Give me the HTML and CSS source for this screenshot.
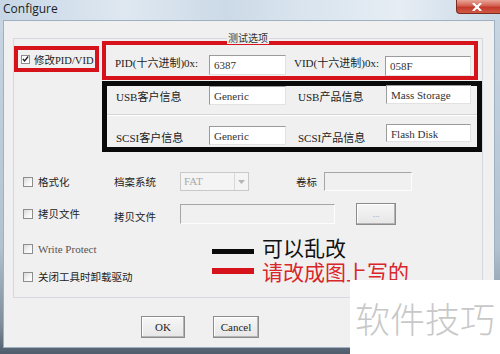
FILE: index.html
```html
<!DOCTYPE html>
<html lang="zh-CN">
<head>
  <meta charset="UTF-8" />
  <title>Configure</title>
  <link rel="stylesheet" href="styles.css">
</head>
<body>
  <div class="window">
    <div class="titlebar">
      <span class="title">Configure</span>
      <span class="close">
        <svg width="10" height="8" viewBox="0 0 10 8"><path d="M1.5 0.5 L8.5 7.5 M8.5 0.5 L1.5 7.5" stroke="#fff" stroke-width="2.2" stroke-linecap="round"/></svg>
      </span>
    </div>

    <div class="client">
      <div class="group">
        <span class="group-title">测试选项</span>

        <div class="top">
          <label class="pid-flag mark-red">
            <span class="check">
              <svg width="8" height="8" viewBox="0 0 8 8"><path d="M1 4 L3 6.3 L7 1.2" fill="none" stroke="#222" stroke-width="1.6"/></svg>
            </span>
            修改PID/VID
          </label>

          <div class="id-fields">
            <div class="id-row mark-red">
              <span class="lbl w94">PID(十六进制)0x:</span>
              <span class="input w77">6387</span>
              <span class="lbl w91 ml8">VID(十六进制)0x:</span>
              <span class="input w86 drop1">058F</span>
            </div>

            <div class="info mark-black">
              <div class="info-row">
                <span class="lbl w93 lbl-r1">USB客户信息</span>
                <span class="input w77 h19">Generic</span>
                <span class="lbl w88 ml12 lbl-r1">USB产品信息</span>
                <span class="input w85 h19 up1">Mass Storage</span>
              </div>
              <div class="sep"></div>
              <div class="info-row">
                <span class="lbl w93 lbl-r2">SCSI客户信息</span>
                <span class="input w77 h19 mt10">Generic</span>
                <span class="lbl w88 ml12 lbl-r2">SCSI产品信息</span>
                <span class="input w85 h18 mt8">Flash Disk</span>
              </div>
            </div>
          </div>
        </div>

        <div class="opt-row row-format">
          <label class="check-cell"><span class="check"></span>格式化</label>
          <span class="lbl-sans w66">档案系统</span>
          <span class="select">
            <span class="select-text">FAT</span>
            <span class="select-arrow">
              <svg width="7" height="4" viewBox="0 0 7 4"><path d="M0 0 H7 L3.5 4 Z" fill="#b5b5b5"/></svg>
            </span>
          </span>
          <span class="lbl-sans vol">卷标</span>
          <span class="input-off w88"></span>
        </div>

        <div class="opt-row row-copy">
          <label class="check-cell"><span class="check"></span>拷贝文件</label>
          <span class="lbl-sans w66 low">拷贝文件</span>
          <span class="input-off w155"></span>
          <button class="btn btn-dots">...</button>
        </div>

        <div class="opt-row row-protect">
          <label class="check-cell serif-lbl"><span class="check"></span>Write Protect</label>
        </div>

        <div class="opt-row row-unload">
          <label class="check-cell"><span class="check"></span>关闭工具时卸载驱动</label>
        </div>
      </div>

      <div class="buttons">
        <button class="btn btn-ok">OK</button>
        <button class="btn btn-cancel">Cancel</button>
      </div>
    </div>

    <!-- annotation legend -->
    <div class="legend">
      <div class="legend-item">
        <span class="bar bar-black"></span>
        <span class="legend-text">可以乱改</span>
      </div>
      <div class="legend-item red">
        <span class="bar bar-red"></span>
        <span class="legend-text">请改成图上写的</span>
      </div>
    </div>

    <div class="watermark">软件技巧</div>
  </div>
</body>
</html>
```

FILE: styles.css
```css
* { margin: 0; padding: 0; box-sizing: border-box; }
body {
  font-family: "Liberation Serif", "Noto Sans CJK SC", serif;
  background: #fff;
}
.window {
  position: relative;
  width: 500px;
  height: 354px;
  overflow: hidden;
  background: linear-gradient(#c9d7e5, #b2c1d0 70%, #7d8b9a 92%, #4f5c6b);
}
/* Title bar */
.titlebar {
  height: 20px;
  display: flex;
  justify-content: space-between;
  align-items: flex-start;
  background: linear-gradient(to right, #c7d6e6, #dfe8f1 25%, #ccdae7 45%, #d9e4ee 60%, #e6edf4 80%, #c9d8e6);
}
.title {
  font-family: "Open Sans", "Noto Sans", sans-serif;
  font-size: 12px;
  line-height: 18px;
  padding-left: 3px;
  color: #1b1f24;
}
.close {
  width: 44px;
  height: 14px;
  display: flex;
  align-items: center;
  justify-content: center;
  padding-right: 4px;
  border: 1px solid #7a2b22;
  border-top: none;
  border-right: none;
  border-radius: 0 0 0 4px;
  background: linear-gradient(#e9a597, #d3604f 45%, #c2392b 55%, #d05a45);
}
/* Client area */
.client {
  margin-left: 3px;
  width: 492px;
  height: 328px;
  border: 1px solid #9eb0c2;
  background: #f0f0f0;
}
.group {
  position: relative;
  margin: 17px 0 0 9px;
  width: 470px;
  height: 260px;
  border: 1px solid #d5d9dd;
}
.group-title {
  position: absolute;
  left: 213px;
  top: -7px;
  padding: 0 1px;
  font-family: "Noto Sans CJK SC", sans-serif;
  font-size: 10px;
  line-height: 12px;
  color: #333;
  background: #f0f0f0;
}
/* annotation boxes */
.mark-red { border: 4px solid #d6121b; }
.mark-black { border: 5px solid #0a0a0a; }

.top {
  display: flex;
  margin-top: 2px;
}
.pid-flag {
  display: flex;
  align-items: center;
  gap: 4px;
  width: 86px;
  height: 26px;
  margin-top: 5px;
  margin-right: 3px;
  padding-left: 3px;
  font-size: 10.5px;
  color: #222;
  white-space: nowrap;
}
.id-fields { width: 380px; }
.id-row {
  display: flex;
  align-items: flex-start;
  width: 376px;
  height: 39px;
  padding: 10px 0 0 9px;
}
.info {
  margin-top: 1px;
  width: 380px;
  height: 71px;
}
.info-row {
  display: flex;
  align-items: flex-start;
  height: 28px;
  padding-left: 9px;
}
.info-row + .sep + .info-row { height: 31px; }
.sep {
  height: 2px;
  border-top: 1px solid #d4d4d4;
  border-bottom: 1px solid #fff;
}
.lbl {
  font-size: 11px;
  line-height: 14px;
  margin-top: 1px;
  color: #222;
  white-space: nowrap;
}
.lbl-r1 { margin-top: 4px; }
.lbl-r2 { margin-top: 15px; }
.input {
  height: 20px;
  padding: 2px 4px 0;
  font-size: 11px;
  line-height: 14px;
  color: #333;
  background: #fff;
  border-top: 1px solid #9b9b9b;
  border-left: 1px solid #9b9b9b;
  border-right: 1px solid #e2e2e2;
  border-bottom: 1px solid #e2e2e2;
  white-space: nowrap;
  overflow: hidden;
}
.w66 { width: 66px; }
.w77 { width: 77px; }
.w85 { width: 85px; }
.w86 { width: 86px; }
.w88 { width: 88px; }
.w91 { width: 91px; }
.w93 { width: 93px; }
.w94 { width: 94px; }
.w155 { width: 155px; }
.ml8 { margin-left: 8px; }
.ml12 { margin-left: 12px; }
.h18 { height: 18px; }
.h19 { height: 19px; }
.mt8 { margin-top: 8px; }
.mt10 { margin-top: 10px; }
.up1 { margin-top: -1px; }
.drop1 { margin-top: 1px; }

/* option rows */
.opt-row {
  display: flex;
  align-items: center;
}
.row-format { margin-top: 20px; height: 19px; }
.row-copy { margin-top: 12px; height: 22px; }
.row-protect { margin-top: 17px; height: 14px; }
.row-unload { margin-top: 14px; height: 14px; }
.check-cell {
  display: flex;
  align-items: center;
  gap: 5px;
  width: 100px;
  padding-left: 9px;
  font-family: "Noto Sans CJK SC", sans-serif;
  font-size: 10.5px;
  line-height: 14px;
  color: #222;
  white-space: nowrap;
}
.serif-lbl {
  font-family: "Liberation Serif", serif;
  font-size: 11px;
  color: #555;
}
.check {
  flex: none;
  display: flex;
  align-items: center;
  justify-content: center;
  width: 10px;
  height: 10px;
  border: 1px solid #8d8d8d;
  background: linear-gradient(135deg, #d9d9d9, #f6f6f6 60%, #fff);
}
.pid-flag .check { width: 9px; height: 9px; background: #fff; }
.lbl-sans {
  font-family: "Noto Sans CJK SC", sans-serif;
  font-size: 10.5px;
  line-height: 14px;
  color: #222;
}
.low { margin-top: 6px; }
.vol { margin-left: 47px; width: 28px; }
.select {
  display: flex;
  width: 69px;
  height: 19px;
  border: 1px solid #c9c9c9;
  background: #f4f4f4;
}
.select-text {
  flex: 1;
  padding-left: 3px;
  font-size: 11px;
  line-height: 17px;
  color: #a8a8a8;
}
.select-arrow {
  width: 14px;
  display: flex;
  align-items: center;
  justify-content: center;
  border-left: 1px solid #d8d8d8;
}
.input-off {
  height: 19px;
  background: #f0f0f0;
  border-top: 1px solid #a6a6a6;
  border-left: 1px solid #a6a6a6;
  border-right: 1px solid #fdfdfd;
  border-bottom: 1px solid #fdfdfd;
}
.row-copy .input-off { height: 20px; }
.btn {
  font-family: "Liberation Serif", serif;
  font-size: 11px;
  color: #222;
  background: linear-gradient(#f6f6f6, #e6e6e6);
  border: 1px solid #8c8c8c;
  box-shadow: inset -1px -1px #b4b4b4, inset 1px 1px #fff;
}
.btn-dots {
  margin-left: 21px;
  width: 40px;
  height: 22px;
  color: #999;
  font-size: 9px;
}
.buttons {
  display: flex;
  gap: 28px;
  margin-top: 18px;
  padding-left: 137px;
}
.btn-ok { width: 44px; height: 22px; }
.btn-cancel { width: 46px; height: 22px; }

/* legend overlay */
.legend {
  position: absolute;
  left: 212px;
  top: 235px;
}
.legend-item {
  display: flex;
  align-items: center;
  height: 24px;
}
.bar {
  width: 42px;
  height: 5px;
  margin-right: 8px;
}
.bar-black { background: #0a0a0a; margin-top: 9px; }
.bar-red { background: #d6121b; height: 6px; }
.legend-text {
  font-family: "Noto Sans CJK SC", sans-serif;
  font-size: 21px;
  line-height: 24px;
  color: #111;
}
.red .legend-text { color: #d9262b; }

/* watermark */
.watermark {
  position: absolute;
  left: 350px;
  top: 280px;
  width: 150px;
  height: 74px;
  padding: 18px 0 0 5px;
  background: #fff;
  font-family: "Noto Sans CJK SC", sans-serif;
  font-weight: 300;
  font-size: 35px;
  line-height: 40px;
  color: #c8c8c8;
}
```
